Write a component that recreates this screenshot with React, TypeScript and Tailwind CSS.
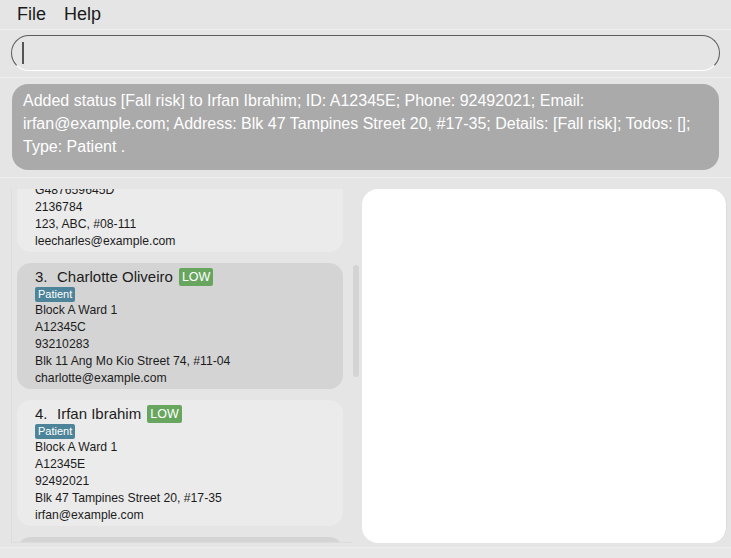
import React from "react";

type Person = {
    idx: number;
    name: string;
    ward: string;
    id: string;
    phone: string;
    address: string;
    email: string;
    selected?: boolean;
};

const people: Person[] = [
    { idx: 2, name: "Charles Lee", ward: "Block B Ward 2", id: "G487659645D", phone: "2136784", address: "123, ABC, #08-111", email: "leecharles@example.com" },
    { idx: 3, name: "Charlotte Oliveiro", ward: "Block A Ward 1", id: "A12345C", phone: "93210283", address: "Blk 11 Ang Mo Kio Street 74, #11-04", email: "charlotte@example.com", selected: true },
    { idx: 4, name: "Irfan Ibrahim", ward: "Block A Ward 1", id: "A12345E", phone: "92492021", address: "Blk 47 Tampines Street 20, #17-35", email: "irfan@example.com" },
    { idx: 5, name: "Roy Balakrishnan", ward: "Block C Ward 3", id: "A12345F", phone: "92624417", address: "Blk 45 Aljunied Street 85, #11-31", email: "royb@example.com", selected: true },
];

const PersonCard = ({ p }: { p: Person }) => (
    <div className={`rounded-[14px] pl-[18px] pt-[5px] h-[126px] shrink-0 ${p.selected ? "bg-[#d4d4d4]" : "bg-[#ebebeb]"}`}>
        <div className="flex items-center h-[18px] text-[15px] text-[#1c1c1c]">
            <span className="w-[22px]">{p.idx}.</span>
            <span>{p.name}</span>
            <span className="ml-[6px] bg-[#68a65f] text-white text-[12.5px] leading-[18px] px-[3px] rounded-[2px]">LOW</span>
        </div>
        <div className="flex mt-[1px]">
            <span className="bg-[#4e8499] text-white text-[11px] leading-[15px] px-[3px] rounded-[2px]">Patient</span>
        </div>
        <div className="text-[12.2px] leading-[17px] text-[#1c1c1c]">
            <div>{p.ward}</div>
            <div>{p.id}</div>
            <div>{p.phone}</div>
            <div>{p.address}</div>
            <div>{p.email}</div>
        </div>
    </div>
);

export default function App() {
    return (
        <div
            className="w-[731px] h-[558px] bg-[#e5e5e5] flex flex-col overflow-hidden"
            style={{ fontFamily: "'Liberation Sans', Arial, sans-serif" }}
        >
            {/* menu bar */}
            <div className="h-[30px] shrink-0 flex items-center pl-[17px] gap-[18px] text-[18px] text-[#1a1a1a] border-b border-[#eeeeee]">
                <span>File</span>
                <span>Help</span>
            </div>

            {/* command box */}
            <div className="h-[48px] shrink-0 px-[11px] pt-[5px] border-b border-[#eeeeee]">
                <div className="h-[36px] rounded-full border border-[#5c5c5c] border-b-white flex items-center pl-[10px]">
                    <div className="w-[2px] h-[22px] bg-[#555555]" />
                </div>
            </div>

            {/* result display */}
            <div className="h-[100px] shrink-0 px-[12px] pt-[6px] border-b border-[#eeeeee]">
                <div className="h-[86px] rounded-[16px] bg-[#aaaaaa] px-[11px] pt-[5px] text-white text-[16px] leading-[23px]">
                    Added status [Fall risk] to Irfan Ibrahim; ID: A12345E; Phone: 92492021; Email: irfan@example.com; Address: Blk 47 Tampines Street 20, #17-35; Details: [Fall risk]; Todos: []; Type: Patient .
                </div>
            </div>

            {/* main area */}
            <div className="h-[370px] shrink-0 flex pt-[11px] pl-[11px] pr-[4px] pb-[4px] border-b border-[#eeeeee]">
                <div className="w-[341px] shrink-0 border-l border-b border-[#dcdcdc] overflow-hidden">
                    <div className="flex flex-col gap-[11px] pl-[5px] pr-[9px] mt-[-63px]">
                        {people.map((p) => (
                            <PersonCard key={p.idx} p={p} />
                        ))}
                    </div>
                </div>
                <div className="w-[10px] shrink-0 pt-[76px] pl-[1px]">
                    <div className="w-[6px] h-[112px] rounded-full bg-[#d4d4d4]" />
                </div>
                <div className="flex-1 bg-white rounded-[16px] border-r border-[#dcdcdc]" />
            </div>

            {/* status bar */}
            <div className="flex-1 bg-[#e8e8e8]" />
        </div>
    );
}
